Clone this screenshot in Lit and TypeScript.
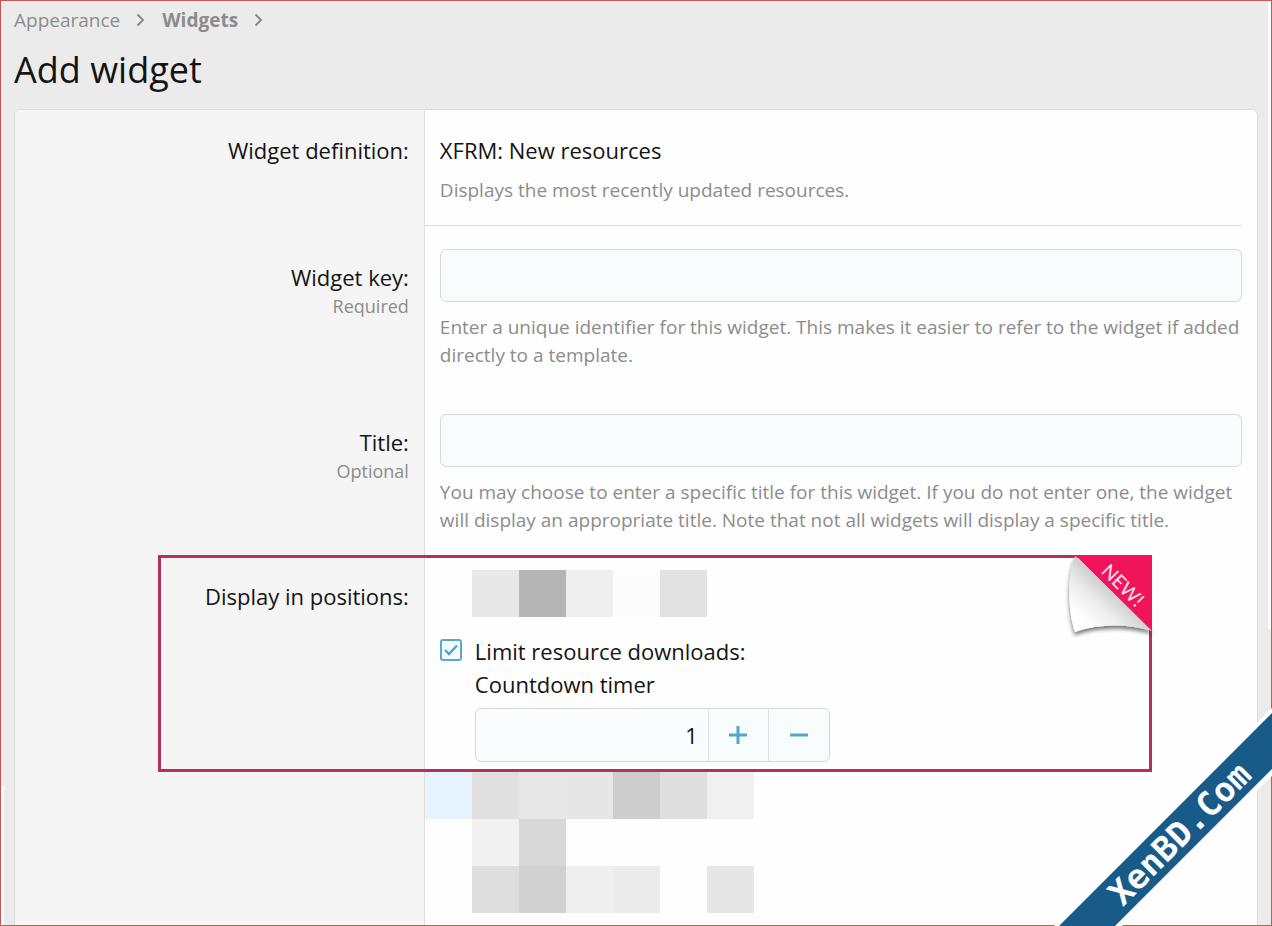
import { LitElement, html, css } from "lit";
import { customElement, property, state } from "lit/decorators.js";

/** One label / value pair of the form. */
@customElement("form-row")
class FormRow extends LitElement {
  static styles = css`
    * {
      box-sizing: border-box;
    }
    :host {
      display: grid;
      grid-template-columns: 33% minmax(0, 1fr);
      position: relative;
    }
    .term {
      padding: 35px 15px 0;
      text-align: right;
      border-right: 1px solid #dedede;
      background: #f5f5f5;
    }
    .value {
      padding: 23px 15px 22px;
    }
    :host([compact]) .term {
      padding-top: 24px;
    }
    :host([compact]) .value {
      padding: 24px 15px 0;
    }
    :host([ruled]) .value {
      padding-bottom: 21px;
      margin-right: 15px;
      border-bottom: 1px solid #dcdcdc;
    }
    :host([tight]) .value {
      padding: 14px 0 0;
    }
    :host([flush]) .value {
      padding: 0;
    }
  `;

  render() {
    return html`
      <div class="term"><slot name="term"></slot></div>
      <div class="value"><slot></slot></div>
    `;
  }
}

/** A strip of equal grey tiles; empty entries stay transparent. */
@customElement("tile-strip")
class TileStrip extends LitElement {
  @property({ attribute: false }) tiles: string[] = [];

  static styles = css`
    :host {
      display: flex;
    }
    .tile {
      width: 47px;
      height: 47px;
    }
  `;

  render() {
    return this.tiles.map(
      (c) => html`<span class="tile" style="background:${c || "transparent"}"></span>`
    );
  }
}

@customElement("app-root")
class AppRoot extends LitElement {
  @state() count = 1;
  @state() limited = true;

  static styles = css`
    * {
      box-sizing: border-box;
    }
    :host {
      display: block;
      position: relative;
      min-height: 100vh;
      overflow: hidden;
      background: #ebebeb;
      color: #141414;
      font-family: "Open Sans", "Noto Sans", sans-serif;
      font-size: 22px;
      line-height: 33px;
      box-sizing: border-box;
    }
    .page {
      display: flex;
      flex-direction: column;
      height: 100vh;
      padding: 0 14px;
    }
    .crumbs {
      display: flex;
      align-items: center;
      gap: 16px;
      padding-top: 6px;
      font-size: 19px;
      line-height: 28px;
    }
    .crumbs a {
      color: #8c8c8c;
      text-decoration: none;
    }
    .crumbs .current {
      font-weight: 700;
    }
    .crumbs svg {
      width: 10px;
      height: 14px;
    }
    h1 {
      margin: 12px 0 15px;
      font-size: 36px;
      line-height: 48px;
      font-weight: 400;
    }
    .panel {
      flex: 1 0 auto;
      display: flex;
      flex-direction: column;
      border: 1px solid #dcdcdc;
      border-bottom: 0;
      border-radius: 6px 6px 0 0;
      background: #fefefe;
      overflow: hidden;
    }
    .last {
      flex: 1;
    }
    .name {
      margin: 0 0 9px;
    }
    .note {
      display: block;
      font-size: 18px;
      line-height: 24px;
      color: #8c8c8c;
    }
    .hint {
      margin: 0 -12px 0 0;
      font-size: 19px;
      line-height: 28px;
      color: #8c8c8c;
    }
    .field {
      display: block;
      width: 100%;
      height: 53px;
      padding: 0 12px;
      border: 1px solid #d3d9da;
      border-radius: 6px;
      background: #f8fcfd;
      color: inherit;
      font: inherit;
      outline: none;
    }
    .field + .hint {
      margin-top: 11px;
    }
    .inset {
      padding-left: 47px;
    }
    .option {
      display: grid;
      grid-template-columns: 22px minmax(0, 1fr);
      column-gap: 13px;
      padding: 18px 15px 0;
    }
    .check {
      position: relative;
      width: 22px;
      height: 22px;
      margin-top: 4px;
    }
    .check input {
      appearance: none;
      display: block;
      width: 22px;
      height: 22px;
      margin: 0;
      border: 2px solid #5aa9cc;
      border-radius: 3px;
      background: #f4fbfe;
    }
    .check svg {
      position: absolute;
      inset: 0;
      pointer-events: none;
    }
    .option label {
      display: block;
    }
    .stepper {
      display: grid;
      grid-template-columns: minmax(0, 1fr) 60px 61px;
      width: 355px;
      max-width: 100%;
      height: 54px;
      margin: 7px 0 10px;
      border: 1px solid #d3d9da;
      border-radius: 6px;
      background: #f8fcfd;
      overflow: hidden;
    }
    .stepper input {
      appearance: textfield;
      width: 100%;
      padding: 0 10px;
      border: 0;
      background: none;
      color: inherit;
      font: inherit;
      text-align: right;
      outline: none;
    }
    .stepper input::-webkit-inner-spin-button {
      appearance: none;
      margin: 0;
    }
    .stepper button {
      display: grid;
      place-items: center;
      padding: 0;
      border: 0;
      border-left: 1px solid #dde2e3;
      background: none;
    }
    .highlight {
      position: absolute;
      inset: -1px 105px auto 143px;
      height: 217px;
      border: 3px solid #b5305f;
      pointer-events: none;
    }
    .curl {
      position: absolute;
      top: -5px;
      right: -8px;
    }
    .curl text {
      font-family: Lato, sans-serif;
      font-size: 19px;
    }
    .banner {
      position: absolute;
      right: 0;
      bottom: 0;
      z-index: 3;
    }
    .banner text {
      font-family: "DejaVu Sans Mono", monospace;
      font-size: 34px;
      font-weight: 700;
    }
    .frame {
      position: absolute;
      inset: 0;
      z-index: 2;
      border: 1px solid #cc5656;
      pointer-events: none;
    }
    .edge {
      position: absolute;
      width: 3px;
      background: #fff;
    }
    .edge.right {
      top: 0;
      right: 0;
      height: 68%;
    }
    .edge.left {
      left: 0;
      bottom: 0;
      height: 15%;
    }
  `;

  private step(by: number) {
    this.count = Math.max(0, this.count + by);
  }

  private chevron() {
    return html`<svg viewBox="0 0 10 14" aria-hidden="true">
      <path d="M1.500 1.500L7 7l-5.500 5.500" fill="none" stroke="#858585" stroke-width="1.800" />
    </svg>`;
  }

  render() {
    return html`
      <div class="page">
        <nav class="crumbs" aria-label="Breadcrumb">
          <a href="#">Appearance</a>${this.chevron()}
          <a class="current" href="#">Widgets</a>${this.chevron()}
        </nav>
        <h1>Add widget</h1>
        <main class="panel">
          <form-row compact ruled>
            <span slot="term">Widget definition:</span>
            <p class="name">XFRM: New resources</p>
            <p class="hint">Displays the most recently updated resources.</p>
          </form-row>
          <form-row>
            <label slot="term" for="key">Widget key: <span class="note">Required</span></label>
            <input id="key" class="field" type="text" />
            <p class="hint">
              Enter a unique identifier for this widget. This makes it easier to refer to the widget
              if added directly to a template.
            </p>
          </form-row>
          <form-row>
            <label slot="term" for="title">Title: <span class="note">Optional</span></label>
            <input id="title" class="field" type="text" />
            <p class="hint">
              You may choose to enter a specific title for this widget. If you do not enter one, the
              widget will display an appropriate title. Note that not all widgets will display a
              specific title.
            </p>
          </form-row>
          <form-row compact tight>
            <span slot="term">Display in positions:</span>
            <tile-strip
              class="inset"
              .tiles=${["#e8e8e8", "#b5b5b5", "#efefef", "#fcfcfc", "#e2e2e2"]}
            ></tile-strip>
            <div class="option">
              <span class="check">
                <input
                  id="limit"
                  type="checkbox"
                  .checked=${this.limited}
                  @change=${(e: Event) =>
                    (this.limited = (e.target as HTMLInputElement).checked)}
                />
                ${this.limited
                  ? html`<svg width="22" height="22" viewBox="0 0 22 22">
                      <path
                        d="M5 11l4 4 8-8.500"
                        fill="none"
                        stroke="#4fa3c9"
                        stroke-width="2.400"
                      />
                    </svg>`
                  : null}
              </span>
              <div>
                <label for="limit">Limit resource downloads:</label>
                <label for="count">Countdown timer</label>
                <div class="stepper">
                  <input id="count" type="number" .value=${String(this.count)} />
                  <button type="button" aria-label="Increase" @click=${() => this.step(1)}>
                    <svg width="18" height="18" viewBox="0 0 18 18">
                      <path d="M0 9h18M9 0v18" stroke="#54a5ca" stroke-width="3" />
                    </svg>
                  </button>
                  <button type="button" aria-label="Decrease" @click=${() => this.step(-1)}>
                    <svg width="18" height="18" viewBox="0 0 18 18">
                      <path d="M0 9h18" stroke="#54a5ca" stroke-width="3" />
                    </svg>
                  </button>
                </div>
              </div>
            </div>
            <div class="highlight">
              <svg class="curl" width="95" height="95" viewBox="0 0 95 95">
                <defs>
                  <linearGradient id="paper" x1="0.15" y1="0.85" x2="0.6" y2="0.4">
                    <stop offset="0" stop-color="#ffffff" />
                    <stop offset="0.45" stop-color="#ededed" />
                    <stop offset="1" stop-color="#c2c2c2" />
                  </linearGradient>
                  <filter id="soft" x="-20%" y="-20%" width="140%" height="150%">
                    <feDropShadow dx="0" dy="3" stdDeviation="2" flood-color="#000" flood-opacity="0.55" />
                  </filter>
                </defs>
                <path
                  d="M13 3C5 24 6 58 13 79C38 70 66 71 91 78Z"
                  fill="url(#paper)"
                  filter="url(#soft)"
                />
                <path d="M13 2H90V78Z" fill="#f0145a" />
                <text
                  x="56"
                  y="37"
                  fill="#ffe3ec"
                  text-anchor="middle"
                  transform="rotate(45 56 37)"
                >NEW!</text>
              </svg>
            </div>
          </form-row>
          <form-row class="last" flush>
            ${[
              ["#e6f2fc", "#e0e0e0", "#e7e7e7", "#e6e6e6", "#cdcdcd", "#dedede", "#f0f0f0"],
              ["", "#f1f1f1", "#d9d9d9"],
              ["", "#dedede", "#d1d1d1", "#efefef", "#ebebeb", "", "#e6e6e6"],
            ].map((t) => html`<tile-strip .tiles=${t}></tile-strip>`)}
          </form-row>
        </main>
      </div>
      <div class="frame"><i class="edge right"></i><i class="edge left"></i></div>
      <svg class="banner" width="222" height="222" viewBox="0 0 222 222">
        <path d="M4 222L222 4V72L72 222Z" fill="#fff" />
        <path d="M9 222L222 9V65L65 222Z" fill="#185a88" />
        <text
          x="138"
          y="138"
          fill="#fff"
          text-anchor="middle"
          transform="rotate(-45 138 138)"
        >XenBD.Com</text>
      </svg>
    `;
  }
}
